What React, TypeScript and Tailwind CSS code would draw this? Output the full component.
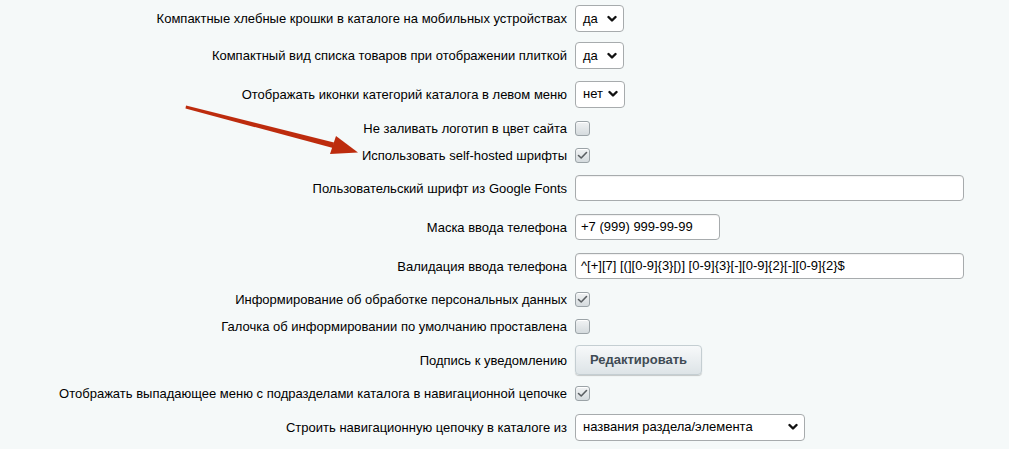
import React from "react";

const Chevron = () => (
  <svg width="10" height="8" viewBox="0 0 10 8" className="shrink-0">
    <polyline points="1.5,2 5,5.5 8.5,2" fill="none" stroke="#111" strokeWidth="2.4" strokeLinecap="round" strokeLinejoin="round" />
  </svg>
);

const Select = ({ value, w }: { value: string; w: string }) => (
  <div className={`${w} h-[27px] bg-white border border-[#a7abad] rounded-[4px] flex items-center justify-between pl-[7px] pr-[6px] text-[13px] text-black`}>
    <span>{value}</span>
    <Chevron />
  </div>
);

const Checkbox = ({ checked }: { checked?: boolean }) => (
  <div className="w-[15px] h-[15px] rounded-[3px] border border-[#9ba3a7] bg-gradient-to-b from-[#f1f3f4] to-[#d5dbde] shadow-[inset_0_1px_0_#fff] flex items-center justify-center">
    {checked && (
      <svg width="11" height="9" viewBox="0 0 11 9">
        <polyline points="1.5,4.5 4.2,7 9.5,1.5" fill="none" stroke="#595e61" strokeWidth="1.6" strokeLinecap="round" strokeLinejoin="round" />
      </svg>
    )}
  </div>
);

const Input = ({ value, w }: { value?: string; w: string }) => (
  <div className={`${w} h-[26px] bg-white border border-[#a7abad] rounded-[4px] shadow-[inset_0_1px_1px_rgba(0,0,0,0.06)] flex items-center pl-[5px] text-[13px] text-black whitespace-nowrap overflow-hidden`}>
    {value}
  </div>
);

const Row = ({ h, label, children }: { h: string; label: string; children: React.ReactNode }) => (
  <div className={`flex items-center ${h}`}>
    <div className="w-[567px] text-right text-[13px] text-black leading-[15px] whitespace-nowrap">{label}</div>
    <div className="ml-[8px] flex items-center">{children}</div>
  </div>
);

export default function App() {
  return (
    <div
      className="relative w-[1009px] h-[449px] bg-[#f5f9f9] overflow-hidden"
      style={{ fontFamily: '"Liberation Sans", Arial, sans-serif' }}
    >
      <Row h="h-[37px]" label="Компактные хлебные крошки в каталоге на мобильных устройствах">
        <Select value="да" w="w-[49px]" />
      </Row>
      <Row h="h-[37px]" label="Компактный вид списка товаров при отображении плиткой">
        <Select value="да" w="w-[49px]" />
      </Row>
      <Row h="h-[40px]" label="Отображать иконки категорий каталога в левом меню">
        <Select value="нет" w="w-[50px]" />
      </Row>
      <Row h="h-[28px]" label="Не заливать логотип в цвет сайта">
        <Checkbox />
      </Row>
      <Row h="h-[27px]" label="Использовать self-hosted шрифты">
        <Checkbox checked />
      </Row>
      <Row h="h-[38px]" label="Пользовательский шрифт из Google Fonts">
        <Input w="w-[389px]" />
      </Row>
      <Row h="h-[40px]" label="Маска ввода телефона">
        <Input w="w-[145px]" value="+7 (999) 999-99-99" />
      </Row>
      <Row h="h-[38px]" label="Валидация ввода телефона">
        <Input w="w-[389px]" value="^[+][7] [(][0-9]{3}[)] [0-9]{3}[-][0-9]{2}[-][0-9]{2}$" />
      </Row>
      <Row h="h-[28px]" label="Информирование об обработке персональных данных">
        <Checkbox checked />
      </Row>
      <Row h="h-[27px]" label="Галочка об информировании по умолчанию проставлена">
        <Checkbox />
      </Row>
      <Row h="h-[40px]" label="Подпись к уведомлению">
        <button className="w-[127px] h-[30px] rounded-[4px] border border-[#c4ced2] bg-gradient-to-b from-[#f7f9fa] to-[#dde4e7] shadow-[0_1px_1px_rgba(0,0,0,0.2)] text-[13px] font-bold text-[#3f4b54]">
          Редактировать
        </button>
      </Row>
      <Row h="h-[27px]" label="Отображать выпадающее меню с подразделами каталога в навигационной цепочке">
        <Checkbox checked />
      </Row>
      <Row h="h-[40px]" label="Строить навигационную цепочку в каталоге из">
        <Select value="названия раздела/элемента" w="w-[230px]" />
      </Row>

      <svg className="absolute left-0 top-0 pointer-events-none" width="1009" height="449">
        <polygon points="186,105.5 334,142.5 333,148 185.5,108.5" fill="#bd2c0e" />
        <polygon points="358,152.5 330,154 336,136" fill="#bd2c0e" />
      </svg>
    </div>
  );
}
